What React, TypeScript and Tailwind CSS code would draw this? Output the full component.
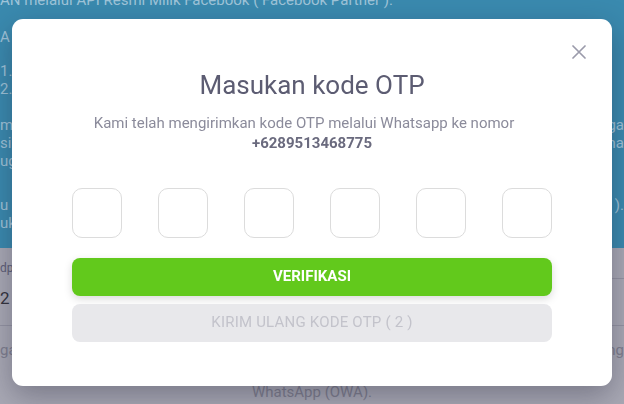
import React, { useState } from 'react';

const font = { fontFamily: 'Roboto, "Liberation Sans", sans-serif' };

function BackgroundPage() {
  return (
    <div className="w-[624px] h-[404px] overflow-hidden" style={font}>
      <div className="bg-[#3a8aaf] text-[#9fc4d9] text-[15px] leading-[18px] pb-[16px] -mt-[9px]">
        <div className="whitespace-nowrap">
          AN melalui API Resmi Milik Facebook ( Facebook Partner ).
        </div>
        <div className="mt-[19px]">A i</div>
        <div className="mt-[16px]">1.</div>
        <div>2.</div>
        <div className="mt-[18px] flex justify-between">
          <span>m t</span>
          <span>ga</span>
        </div>
        <div className="flex justify-between">
          <span>si</span>
          <span>na</span>
        </div>
        <div>ug</div>
        <div className="mt-[26px] flex justify-between">
          <span>u c</span>
          <span>).</span>
        </div>
        <div>uk</div>
      </div>
      <div className="bg-[#a9a9b5] h-[200px]">
        <div className="pt-[12px] text-[12px] leading-[16px] text-[#5f5f78]">dp</div>
        <div className="mt-[2px] flex h-[48px]">
          <div className="w-[300px] border-b border-[#9494a3] flex items-center pb-[6px] text-[17px] text-[#34343e]">
            2
          </div>
          <div className="flex-1 border-y border-[#9494a3]" />
        </div>
        <div className="mt-[14px] text-[15px] leading-[21px] text-[#7f7f8f]">
          <div className="flex justify-between">
            <span>ga</span>
            <span>ng</span>
          </div>
          <div>&nbsp;</div>
          <div className="text-center">WhatsApp (OWA).</div>
        </div>
      </div>
    </div>
  );
}

export default function App() {
  const [digits, setDigits] = useState<string[]>(['', '', '', '', '', '']);

  const onChange = (i: number, v: string) => {
    const next = [...digits];
    next[i] = v.slice(-1);
    setDigits(next);
  };

  return (
    <div className="relative w-[624px] h-[404px] overflow-hidden">
      <BackgroundPage />

      <div className="fixed inset-0 flex items-center justify-center" style={font}>
        <div className="relative w-[600px] bg-white rounded-[11px] shadow-[0_10px_30px_rgba(30,30,50,0.35)] px-[60px] pt-[50px] pb-[44px]">
          <button className="absolute top-[26px] right-[26px] w-[14px] h-[14px] text-[#9b9bab]">
            <svg width="14" height="14" viewBox="0 0 14 14" fill="none">
              <path d="M1 1L13 13M13 1L1 13" stroke="currentColor" strokeWidth="1.7" strokeLinecap="round" />
            </svg>
          </button>

          <h2 className="text-center text-[26px] leading-[32px] text-[#5c5c72]">Masukan kode OTP</h2>
          <p className="mt-[12px] text-center text-[15px] leading-[20px] text-[#8b8b9b]">
            <span className="block pr-[16px]">Kami telah mengirimkan kode OTP melalui Whatsapp ke nomor</span>
            <span className="block font-bold text-[#6a6a7e]">+6289513468775</span>
          </p>

          <div className="mt-[35px] flex justify-between">
            {digits.map((d, i) => (
              <input
                key={i}
                value={d}
                onChange={e => onChange(i, e.target.value)}
                className="w-[50px] h-[50px] rounded-[10px] border border-[#dcdcdc] text-center text-[20px] outline-none"
                inputMode="numeric"
              />
            ))}
          </div>

          <button className="mt-[20px] w-full h-[38px] rounded-[8px] bg-[#62c91c] text-white text-[15px] font-bold shadow-[0_3px_8px_rgba(0,0,0,0.15)]">
            VERIFIKASI
          </button>
          <button className="mt-[8px] w-full h-[38px] rounded-[8px] bg-[#e8e8eb] text-[#c3c3cb] text-[15px] tracking-[0.2px]">
            KIRIM ULANG KODE OTP ( 2 )
          </button>
        </div>
      </div>
    </div>
  );
}
